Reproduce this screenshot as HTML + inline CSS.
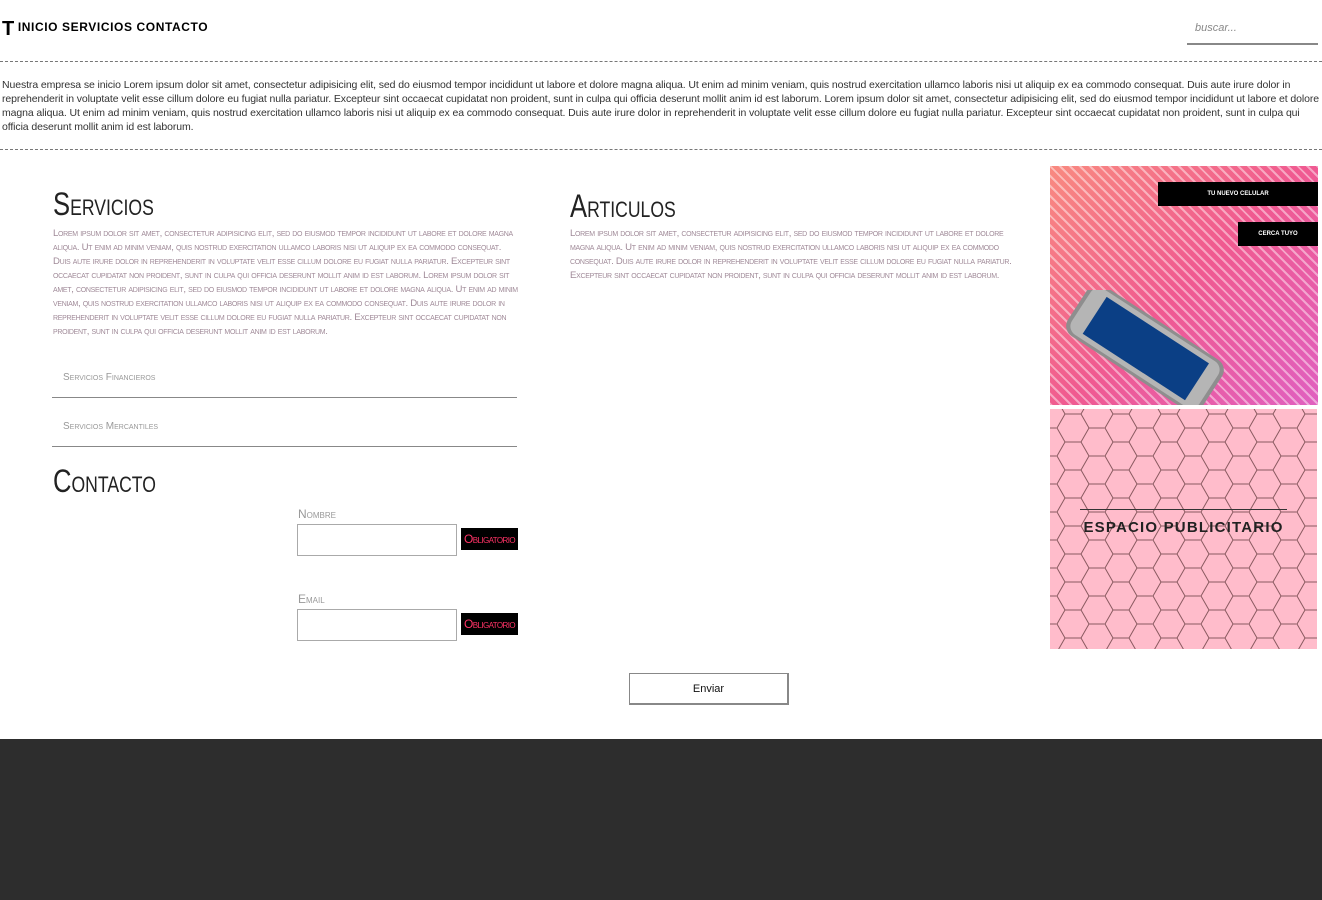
<!DOCTYPE html>
<html><head><meta charset="utf-8"><style>
*{margin:0;padding:0;box-sizing:border-box}
body{width:1322px;height:900px;position:relative;background:#fff;font-family:"Liberation Sans",sans-serif;overflow:hidden;color:#333}
.a{position:absolute}
.nav{left:2px;top:18px;font-weight:bold;font-size:12px;letter-spacing:0.6px;color:#000}
.nav b{font-size:20px;vertical-align:-4px;margin-right:3px}
.dash{left:0;width:1322px;border-top:1px dashed #777}
.intro{left:2px;top:78px;width:1318px;font-size:10.5px;line-height:14px;color:#333;letter-spacing:-0.1px}
h2{font-weight:normal;font-variant:small-caps;font-size:32px;color:#222;transform:scaleX(0.8);transform-origin:left}
.sm{font-variant:small-caps;font-size:9.6px;line-height:14px;color:#a08a98;letter-spacing:-0.3px}
.li{left:52px;width:465px;border-bottom:1px solid #888;font-variant:small-caps;font-size:10px;color:#999;padding-left:11px}
.lbl{font-variant:small-caps;font-size:12px;color:#999}
.inp{width:160px;height:32px;border:1px solid #aaa}
.ob{background:#000;color:#f36;font-variant:small-caps;font-size:12px;height:22px;line-height:22px;width:57px;text-align:center;letter-spacing:-0.6px}
</style></head><body>
<div class="a nav"><b>T</b>INICIO SERVICIOS CONTACTO</div>
<div class="a" style="left:1187px;top:22px;font-size:11px;font-style:italic;color:#888;padding-left:8px">buscar...</div>
<div class="a" style="left:1187px;top:43px;width:131px;height:2px;background:#888"></div>
<div class="a dash" style="top:61px"></div>
<div class="a intro">Nuestra empresa se inicio Lorem ipsum dolor sit amet, consectetur adipisicing elit, sed do eiusmod tempor incididunt ut labore et dolore magna aliqua. Ut enim ad minim veniam, quis nostrud exercitation ullamco laboris nisi ut aliquip ex ea commodo consequat. Duis aute irure dolor in reprehenderit in voluptate velit esse cillum dolore eu fugiat nulla pariatur. Excepteur sint occaecat cupidatat non proident, sunt in culpa qui officia deserunt mollit anim id est laborum. Lorem ipsum dolor sit amet, consectetur adipisicing elit, sed do eiusmod tempor incididunt ut labore et dolore magna aliqua. Ut enim ad minim veniam, quis nostrud exercitation ullamco laboris nisi ut aliquip ex ea commodo consequat. Duis aute irure dolor in reprehenderit in voluptate velit esse cillum dolore eu fugiat nulla pariatur. Excepteur sint occaecat cupidatat non proident, sunt in culpa qui officia deserunt mollit anim id est laborum.</div>
<div class="a dash" style="top:149px"></div>

<h2 class="a" style="left:53px;top:186px">Servicios</h2>
<div class="a sm" style="left:53px;top:227px;width:465px">Lorem ipsum dolor sit amet, consectetur adipisicing elit, sed do eiusmod tempor incididunt ut labore et dolore magna aliqua. Ut enim ad minim veniam, quis nostrud exercitation ullamco laboris nisi ut aliquip ex ea commodo consequat. Duis aute irure dolor in reprehenderit in voluptate velit esse cillum dolore eu fugiat nulla pariatur. Excepteur sint occaecat cupidatat non proident, sunt in culpa qui officia deserunt mollit anim id est laborum. Lorem ipsum dolor sit amet, consectetur adipisicing elit, sed do eiusmod tempor incididunt ut labore et dolore magna aliqua. Ut enim ad minim veniam, quis nostrud exercitation ullamco laboris nisi ut aliquip ex ea commodo consequat. Duis aute irure dolor in reprehenderit in voluptate velit esse cillum dolore eu fugiat nulla pariatur. Excepteur sint occaecat cupidatat non proident, sunt in culpa qui officia deserunt mollit anim id est laborum.</div>
<div class="a li" style="top:372px;height:26px">Servicios Financieros</div>
<div class="a li" style="top:421px;height:26px">Servicios Mercantiles</div>

<h2 class="a" style="left:53px;top:463px">Contacto</h2>
<div class="a lbl" style="left:298px;top:507px">Nombre</div>
<div class="a inp" style="left:297px;top:524px"></div>
<div class="a ob" style="left:461px;top:528px">Obligatorio</div>
<div class="a lbl" style="left:298px;top:592px">Email</div>
<div class="a inp" style="left:297px;top:609px"></div>
<div class="a ob" style="left:461px;top:613px">Obligatorio</div>
<div class="a" style="left:629px;top:673px;width:160px;height:32px;border:1px solid #888;border-right-width:2px;border-bottom-width:2px;font-size:11px;text-align:center;line-height:30px;color:#111">Enviar</div>

<h2 class="a" style="left:570px;top:188px">Articulos</h2>
<div class="a sm" style="left:570px;top:227px;width:458px">Lorem ipsum dolor sit amet, consectetur adipisicing elit, sed do eiusmod tempor incididunt ut labore et dolore magna aliqua. Ut enim ad minim veniam, quis nostrud exercitation ullamco laboris nisi ut aliquip ex ea commodo consequat. Duis aute irure dolor in reprehenderit in voluptate velit esse cillum dolore eu fugiat nulla pariatur. Excepteur sint occaecat cupidatat non proident, sunt in culpa qui officia deserunt mollit anim id est laborum.</div>

<div class="a" style="left:1050px;top:166px;width:268px;height:239px;background:repeating-linear-gradient(45deg,rgba(255,255,255,.45) 0 2px,transparent 2px 7px),linear-gradient(135deg,#f98a80,#f05a90 50%,#e060c0)"></div>
<svg class="a" style="left:1060px;top:290px" width="175" height="115"><g transform="translate(85 58) rotate(33)"><rect x="-80" y="-30" width="160" height="60" rx="12" fill="#8e8e8e"/><rect x="-76" y="-27" width="152" height="54" rx="10" fill="#b5b5b5"/><rect x="-60" y="-22" width="122" height="44" fill="#0b3f85"/></g></svg>
<div class="a" style="left:1158px;top:182px;width:160px;height:24px;background:#000;color:#fff;font-size:6px;font-weight:bold;text-align:center;line-height:24px">TU NUEVO CELULAR</div>
<div class="a" style="left:1238px;top:222px;width:80px;height:24px;background:#000;color:#fff;font-size:6px;font-weight:bold;text-align:center;line-height:24px">CERCA TUYO</div>

<div class="a" style="left:1050px;top:409px;width:267px;height:240px;background-color:#ffbccb"></div>
<svg class="a" style="left:1050px;top:409px" width="267" height="240"><defs><pattern id="h" width="48" height="28" patternUnits="userSpaceOnUse" x="7" y="5"><path d="M0 14 L8 0 L24 0 L32 14 L24 28 L8 28 Z M32 14 L48 14" fill="none" stroke="#8a5a60" stroke-width="1"/></pattern></defs><rect width="267" height="240" fill="url(#h)"/></svg>
<div class="a" style="left:1080px;top:509px;width:207px;border-top:1px solid #333"></div>
<div class="a" style="left:1050px;top:519px;width:267px;text-align:center;font-weight:900;font-size:15px;letter-spacing:1.2px;color:#222">ESPACIO PUBLICITARIO</div>

<div class="a" style="left:0;top:739px;width:1322px;height:161px;background:#2d2d2d"></div>
</body></html>
